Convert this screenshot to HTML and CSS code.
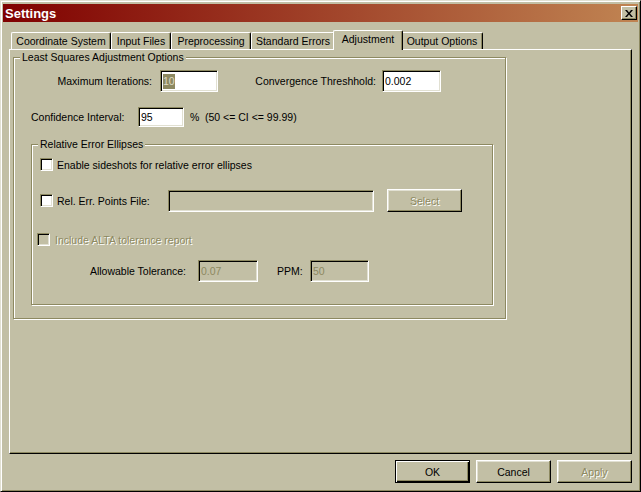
FILE: index.html
```html
<!DOCTYPE html>
<html lang="en">

<head>
    <meta charset="utf-8">
    <title>Settings</title>
    <link rel="stylesheet" href="styles.css">
</head>

<body>
    <div class="window">
        <div class="titlebar">
            <span class="title">Settings</span>
            <span class="close-btn">
                <svg width="8" height="7" viewBox="0 0 8 7">
                    <path d="M0 0h2l2 2.4 2-2.4h2l-3 3.5 3 3.5h-2l-2-2.4-2 2.4h-2l3-3.5z" fill="#000" />
                </svg>
            </span>
        </div>

        <div class="content">
            <div class="tabs">
                <div class="tab tab-coord">Coordinate System</div>
                <div class="tab tab-input">Input Files</div>
                <div class="tab tab-pre">Preprocessing</div>
                <div class="tab tab-std">Standard Errors</div>
                <div class="tab tab-adj active">Adjustment</div>
                <div class="tab tab-out">Output Options</div>
            </div>

            <div class="panel">
                <fieldset class="group group-lsq">
                    <legend>Least Squares Adjustment Options</legend>

                    <div class="row row-iter">
                        <label class="lbl lbl-maxit">Maximum Iterations:</label>
                        <div class="field field-maxit"><span class="sel">10</span></div>
                        <label class="lbl lbl-conv">Convergence Threshhold:</label>
                        <div class="field field-conv">0.002</div>
                    </div>

                    <div class="row row-ci">
                        <label class="lbl lbl-ci">Confidence Interval:</label>
                        <div class="field field-ci">95</div>
                        <span class="pct">%</span>
                        <span>(50 &lt;= CI &lt;= 99.99)</span>
                    </div>

                    <fieldset class="group group-ree">
                        <legend>Relative Error Ellipses</legend>

                        <div class="row row-sideshots">
                            <span class="check"></span>
                            <label class="check-lbl">Enable sideshots for relative error ellipses</label>
                        </div>

                        <div class="row row-points">
                            <span class="check"></span>
                            <label class="check-lbl lbl-points">Rel. Err. Points File:</label>
                            <div class="field disabled field-points"></div>
                            <div class="btn disabled btn-select">Select</div>
                        </div>

                        <div class="row row-alta">
                            <span class="check disabled"></span>
                            <label class="check-lbl grayed">Include ALTA tolerance report</label>
                        </div>

                        <div class="row row-tol">
                            <label class="lbl lbl-tol">Allowable Tolerance:</label>
                            <div class="field disabled field-tol">0.07</div>
                            <label class="lbl lbl-ppm">PPM:</label>
                            <div class="field disabled field-ppm">50</div>
                        </div>
                    </fieldset>
                </fieldset>
            </div>

            <div class="buttons">
                <div class="btn btn-default">OK</div>
                <div class="btn">Cancel</div>
                <div class="btn disabled">Apply</div>
            </div>
        </div>
    </div>
</body>

</html>
```

FILE: styles.css
```css
/* windows classic "brick" colours */
* {
    box-sizing: border-box;
}

body {
    margin: 0;
    font-family: "Liberation Sans", Arial, sans-serif;
    font-size: 10.5px;
    color: #000;
    background: #c2bfa5;
}

.window {
    width: 641px;
    height: 492px;
    display: flex;
    flex-direction: column;
    padding: 2px;
    border: 1px solid;
    border-color: #e1e0d2 #000 #000 #e1e0d2;
    box-shadow: inset 1px 1px #fff, inset -1px -1px #8d8961;
    background: #c2bfa5;
}

.titlebar {
    height: 18px;
    margin-top: 1px;
    display: flex;
    align-items: center;
    justify-content: space-between;
    padding: 0 1px 0 2px;
    background: linear-gradient(to right, #800000, #c08452);
}

.title {
    color: #fff;
    font-weight: bold;
    font-size: 13px;
}

.close-btn {
    width: 16px;
    height: 14px;
    display: flex;
    align-items: center;
    justify-content: center;
    background: #c2bfa5;
    border: 1px solid;
    border-color: #fff #000 #000 #fff;
    box-shadow: inset -1px -1px #8d8961;
}

.content {
    flex: 1;
    display: flex;
    flex-direction: column;
    padding: 8px 6px 0;
}

/* tab strip */
.tabs {
    height: 19px;
    display: flex;
    align-items: flex-end;
    padding-left: 2px;
}

.tab {
    height: 17px;
    display: flex;
    align-items: center;
    justify-content: center;
    border: 1px solid;
    border-bottom: none;
    border-color: #fff #000 #000 #fff;
    border-radius: 2px 2px 0 0;
    box-shadow: inset -1px 0 #8d8961;
    background: #c2bfa5;
    white-space: nowrap;
}

.tab.active {
    height: 20px;
    margin: 0 -2px -1px;
    padding-bottom: 3px;
    position: relative;
    z-index: 1;
}

.tab-coord { width: 100px; }
.tab-input { width: 60px; }
.tab-pre { width: 80px; }
.tab-std { width: 84px; }
.tab-adj { width: 70px; }
.tab-out { width: 82px; }

.panel {
    height: 405px;
    border: 1px solid;
    border-color: #fff #000 #000 #fff;
    box-shadow: inset -1px -1px #8d8961;
}

/* etched group boxes */
.group {
    margin: 0;
    padding: 0;
    min-width: 0;
    border: 1px solid #8d8961;
    box-shadow: inset 1px 1px #fff, 1px 1px #fff;

    legend {
        margin-left: 6px;
        padding: 0 2px;
        line-height: 13px;
        background: #c2bfa5;
    }
}

.group-lsq {
    width: 493px;
    margin: 1px 0 0 3px;
    padding-bottom: 13px;
}

.group-ree {
    width: 462px;
    margin: 11px 0 0 17px;
    padding-bottom: 22px;
}

.row {
    display: flex;
    align-items: center;
    white-space: nowrap;
}

.lbl {
    flex: none;
    text-align: right;
}

.field {
    flex: none;
    height: 22px;
    display: flex;
    align-items: center;
    padding: 0 2px;
    background: #fff;
    border: 1px solid;
    border-color: #8d8961 #fff #fff #8d8961;
    box-shadow: inset 1px 1px #000, inset -1px -1px #e1e0d2;
}

.field.disabled {
    background: #c2bfa5;
    color: #8d8961;
}

.sel {
    background: #8d8961;
    color: #dedac4;
    line-height: 15px;
}

.row-iter {
    margin-top: 6px;
    height: 22px;
}

.lbl-maxit { width: 138px; }
.field-maxit { width: 58px; margin-left: 8px; }
.lbl-conv { width: 158px; }
.field-conv { width: 59px; margin-left: 6px; }

.row-ci {
    margin-top: 15px;
    height: 20px;
    padding-left: 17px;
}

.lbl-ci {
    width: 107px;
    text-align: left;
}

.field-ci {
    width: 46px;
    height: 20px;
}

.pct {
    width: 15px;
    margin-left: 6px;
}

.check {
    flex: none;
    width: 13px;
    height: 13px;
    background: #fff;
    border: 1px solid;
    border-color: #8d8961 #fff #fff #8d8961;
    box-shadow: inset 1px 1px #000, inset -1px -1px #e1e0d2;
}

.check.disabled {
    background: #c2bfa5;
}

.check-lbl {
    margin-left: 4px;
}

.grayed {
    color: #8d8961;
    text-shadow: 1px 1px #fff;
}

.row-sideshots {
    margin-top: 7px;
    height: 13px;
    padding-left: 8px;
}

.row-points {
    margin-top: 18px;
    height: 23px;
    padding-left: 8px;
}

.lbl-points { width: 111px; }
.field-points { width: 206px; }
.btn-select { margin-left: 13px; }

.row-alta {
    margin-top: 21px;
    height: 13px;
    padding-left: 5px;

    .check-lbl {
        margin-left: 5px;
    }
}

.row-tol {
    margin-top: 14px;
    height: 22px;
}

.lbl-tol { width: 154px; }
.field-tol { width: 60px; margin-left: 12px; }

.lbl-ppm {
    width: 33px;
    margin-left: 19px;
    text-align: left;
}

.field-ppm { width: 59px; }

/* dialog buttons */
.buttons {
    display: flex;
    justify-content: flex-end;
    gap: 6px;
    margin-top: 6px;
}

.btn {
    flex: none;
    width: 75px;
    height: 23px;
    display: flex;
    align-items: center;
    justify-content: center;
    border: 1px solid;
    border-color: #fff #000 #000 #fff;
    box-shadow: inset -1px -1px #8d8961, inset 1px 1px #e1e0d2;
}

.btn.disabled {
    color: #8d8961;
    text-shadow: 1px 1px #fff;
}

.btn-default {
    border-color: #000;
    box-shadow: inset 1px 1px #fff, inset -1px -1px #000, inset -2px -2px #8d8961;
}
```
